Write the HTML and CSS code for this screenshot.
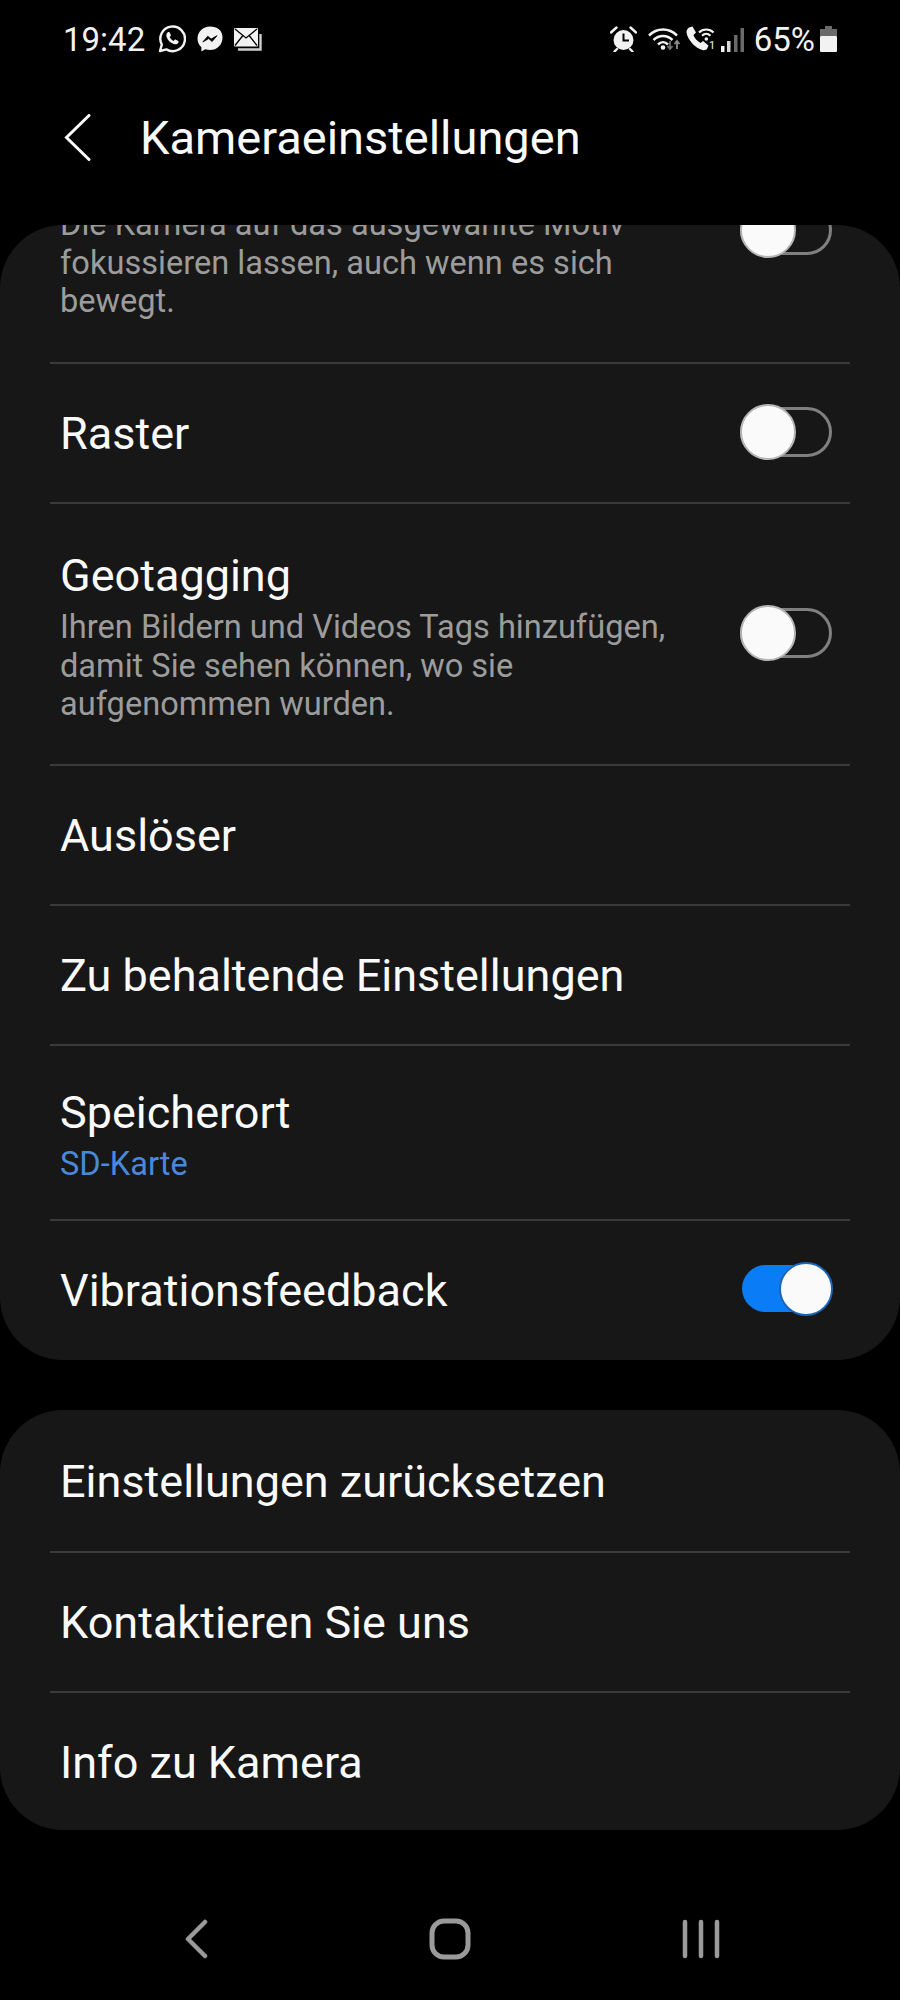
FILE: index.html
```html
<!DOCTYPE HTML>
<html>
<head>
<meta charset="utf-8">
<title>Kameraeinstellungen</title>
<link rel="stylesheet" href="styles.css">
</head>
<body>
	<div class="statusbar">
		<div class="status-left">
			<span class="time">19:42</span>
			<svg class="ic-whatsapp" width="28" height="28" viewBox="0 0 28 28">
				<path d="M2 26l1.800-6.400A12.300 12.300 0 1 1 8.400 24.400z" fill="none" stroke="#f2f2f2" stroke-width="2.400" stroke-linejoin="round"/>
				<path d="M9.500 7.500c1-.8 2-.6 2.400.3l.9 2.100c.2.500 0 1-.4 1.400l-.7.800c.8 1.700 2.100 3 3.900 3.900l.9-1c.4-.4.900-.5 1.400-.3l2 1c.8.400.9 1.300.3 2.200-1 1.400-2.700 1.700-4.500 1-3.600-1.300-6-3.900-7.100-7-.5-1.700-.2-3.300.9-4.400z" fill="#f2f2f2"/>
			</svg>
			<svg class="ic-messenger" width="26" height="26" viewBox="0 0 26 26">
				<path d="M13 0.500C6 0.500 0.500 5.700 0.500 12.500c0 3.500 1.500 6.600 3.900 8.800v4.200l3.900-2.200c1.500.5 3 .8 4.700.8 7 0 12.500-5.200 12.500-12.600S20 .5 13 .5z" fill="#f2f2f2"/>
				<path d="M5.800 16l5-5.800 3.300 2.900 5.900-3.400-4.900 5.800-3.400-2.900z" fill="#000" stroke="#000" stroke-width=".8" stroke-linejoin="round"/>
			</svg>
			<svg class="ic-mail" width="28" height="23" viewBox="0 0 28 23">
				<path d="M4 21.500h22.500V6" fill="none" stroke="#cfcfcf" stroke-width="2.400"/>
				<rect x="0" y="0" width="24" height="18.500" rx="1" fill="#f2f2f2"/>
				<path d="M1 1l11 9 11-9M1 17.500l7.500-9.500M23 17.500l-7.500-9.500" fill="none" stroke="#000" stroke-width="1.300"/>
			</svg>
		</div>
		<div class="status-right">
			<svg class="ic-alarm" width="27" height="26" viewBox="0 0 27 26">
				<circle cx="13.500" cy="14" r="10" fill="#f2f2f2"/>
				<path d="M13.500 7.500V14.500H19" fill="none" stroke="#000" stroke-width="2"/>
				<path d="M1 6.500L6.500 1.500M26 6.500L20.500 1.500M4.500 25.500l2.500-2.500M22.500 25.500l-2.500-2.500" fill="none" stroke="#f2f2f2" stroke-width="2.400" stroke-linecap="round"/>
			</svg>
			<svg class="ic-wifi" width="33" height="24" viewBox="0 0 33 24">
				<path d="M1 8.500C9 .5 21 .5 29 8.500M5.500 13c5.500-5.500 13.500-5.500 19 0M10 17.500c3-3 7-3 10 0" fill="none" stroke="#f2f2f2" stroke-width="2.500"/>
				<circle cx="15" cy="20.500" r="2.300" fill="#f2f2f2"/>
				<path d="M22 14v7M19.500 19l2.500 3 2.500-3" fill="none" stroke="#6e6e6e" stroke-width="1.800"/>
				<path d="M29 22v-7M26.500 17l2.500-3 2.500 3" fill="none" stroke="#8a8a8a" stroke-width="1.800"/>
			</svg>
			<svg class="ic-call" width="30" height="26" viewBox="0 0 30 26">
				<path d="M3 1.500l3.500-1 3.500 6-2.500 2.500c1 3 3.500 6 7 8l2.500-2 5.500 4.500-1.500 3.500c-1 1-2.500 1.500-4.500 1C9 22 1.500 13.500.5 6.500.3 4.500 1.500 2.500 3 1.500z" fill="#f2f2f2"/>
				<path d="M13 6.500c4-4 10.500-4 14.500 0M16 9.800c2.500-2.500 6-2.500 8.500 0" fill="none" stroke="#f2f2f2" stroke-width="2.200"/>
				<circle cx="20.300" cy="13" r="1.800" fill="#f2f2f2"/>
				<text class="sim" x="23" y="23">1</text>
			</svg>
			<svg class="ic-signal" width="23" height="25" viewBox="0 0 23 25">
				<rect x="0" y="19" width="3.500" height="6" fill="#f2f2f2"/>
				<rect x="6" y="14" width="3.500" height="11" fill="#d8d8d8"/>
				<rect x="13" y="8" width="3.500" height="17" fill="#6a6a6a"/>
				<rect x="19.500" y="1" width="3.500" height="24" fill="#6a6a6a"/>
			</svg>
			<span class="percent">65%</span>
			<svg class="ic-battery" width="17" height="26" viewBox="0 0 17 26">
				<path d="M5 0h7v3h5v7H0V3h5z" fill="#6a6a6a"/>
				<rect x="0" y="10" width="17" height="16" rx="1" fill="#f2f2f2"/>
			</svg>
		</div>
	</div>

	<div class="appbar">
		<svg class="ic-back" width="27" height="47" viewBox="0 0 27 47">
			<path d="M25 1.500L2.500 23.500 25 45.500" fill="none" stroke="#fafafa" stroke-width="3" stroke-linecap="round"/>
		</svg>
		<h1>Kameraeinstellungen</h1>
	</div>

	<div class="card">
		<div class="row tall clipped">
			<div class="text">
				<p class="desc">Die Kamera auf das ausgewählte Motiv fokussieren lassen, auch wenn es sich bewegt.</p>
			</div>
			<div class="toggle"></div>
		</div>
		<div class="row">
			<div class="text"><p class="name">Raster</p></div>
			<div class="toggle"></div>
		</div>
		<div class="row tall">
			<div class="text">
				<p class="name">Geotagging</p>
				<p class="desc">Ihren Bildern und Videos Tags hinzufügen, damit Sie sehen können, wo sie aufgenommen wurden.</p>
			</div>
			<div class="toggle"></div>
		</div>
		<div class="row">
			<div class="text"><p class="name">Auslöser</p></div>
		</div>
		<div class="row">
			<div class="text"><p class="name">Zu behaltende Einstellungen</p></div>
		</div>
		<div class="row mid">
			<div class="text">
				<p class="name">Speicherort</p>
				<p class="value">SD-Karte</p>
			</div>
		</div>
		<div class="row">
			<div class="text"><p class="name">Vibrationsfeedback</p></div>
			<div class="toggle on"></div>
		</div>
	</div>

	<div class="card second">
		<div class="row">
			<div class="text"><p class="name">Einstellungen zurücksetzen</p></div>
		</div>
		<div class="row">
			<div class="text"><p class="name">Kontaktieren Sie uns</p></div>
		</div>
		<div class="row">
			<div class="text"><p class="name">Info zu Kamera</p></div>
		</div>
	</div>

	<div class="navbar">
		<svg width="24" height="40" viewBox="0 0 24 40">
			<path d="M21 3L4 20l17 17" fill="none" stroke="#9a9a9a" stroke-width="4.500" stroke-linecap="round" stroke-linejoin="round"/>
		</svg>
		<svg class="nav-home" width="42" height="42" viewBox="0 0 42 42">
			<rect x="3" y="3" width="36" height="36" rx="12" fill="none" stroke="#9a9a9a" stroke-width="5"/>
		</svg>
		<svg class="nav-recent" width="38" height="40" viewBox="0 0 38 40">
			<path d="M3 3v34M19 3v34M35 3v34" fill="none" stroke="#9a9a9a" stroke-width="4.500" stroke-linecap="round"/>
		</svg>
	</div>
</body>
</html>
```

FILE: styles.css
```css
*{
	margin: 0;
	padding: 0;
	box-sizing: border-box;
}

body{
	width: 900px;
	height: 2000px;
	background-color: #000;
	color: #fafafa;
	font-family: Roboto, "Liberation Sans", sans-serif;
	overflow: hidden;
}

.statusbar{
	height: 78px;
	padding: 0 63px 0 63px;
	display: flex;
	justify-content: space-between;
	align-items: center;
	color: #f2f2f2;
	font-size: 33px;
}
.status-left,
.status-right{
	display: flex;
	align-items: center;
}
.time{
	margin-right: 13px;
}
.ic-messenger{
	margin-left: 11px;
}
.ic-mail{
	margin-left: 11px;
}
.ic-wifi{
	margin-left: 11px;
}
.ic-call{
	margin-left: 5px;
}
.ic-signal{
	margin-left: 5px;
}
.percent{
	margin-left: 10px;
	margin-right: 5px;
}
.sim{
	font-size: 11px;
	fill: #f2f2f2;
}

.appbar{
	height: 147px;
	padding: 0 0 29px 64px;
	display: flex;
	align-items: center;
}
.appbar h1{
	margin-left: 49px;
	font-size: 47px;
	font-weight: 400;
}

.card{
	height: 1135px;
	background-color: #171717;
	border-radius: 63px;
	overflow: hidden;
}
.card.second{
	height: 420px;
	margin-top: 50px;
}

.row{
	height: 140px;
	margin: 0 50px;
	padding: 0 18px 0 10px;
	border-top: 2px solid #3a3a3a;
	display: flex;
	justify-content: space-between;
	align-items: center;
}
.row:first-child{
	border-top: 0;
}
.row.tall{
	height: 262px;
}
.row.mid{
	height: 175px;
}
/* list is scrolled, the top of this row is under the app bar */
.row.clipped{
	margin-top: -125px;
}
.row.clipped .text{
	padding-top: 64px;
}
.card.second .row:first-child{
	height: 141px;
}

.text{
	width: 620px;
	padding-top: 2px;
}
.row.tall .text,
.row.mid .text{
	padding-top: 0;
}
.row.tall.clipped .text{
	padding-top: 64px;
}
.name{
	font-size: 45px;
	line-height: 64px;
}
.desc{
	font-size: 32.600px;
	line-height: 38.500px;
	color: #9c9c9c;
}
.value{
	font-size: 32.600px;
	line-height: 38.500px;
	color: #4a88dc;
}

.toggle{
	width: 92px;
	height: 50px;
	margin-bottom: 3px;
	border: 3px solid #808080;
	border-radius: 25px;
	position: relative;
	flex: none;
}
.toggle::after{
	content: "";
	box-sizing: border-box;
	position: absolute;
	left: -3px;
	top: -6px;
	width: 56px;
	height: 56px;
	border: 2px solid #b5b5b5;
	border-radius: 50%;
	background-color: #fafafa;
}
.toggle.on{
	width: 90px;
	height: 47px;
	border: 0;
	background-color: #0a7cf5;
}
.toggle.on::after{
	left: 37px;
	top: -3px;
	width: 54px;
	height: 54px;
	border-color: #1c66b8;
}

.navbar{
	height: 171px;
	padding: 47px 0 0 184px;
	display: flex;
	align-items: center;
}
.nav-home{
	margin-left: 221px;
}
.nav-recent{
	margin-left: 211px;
}
```
